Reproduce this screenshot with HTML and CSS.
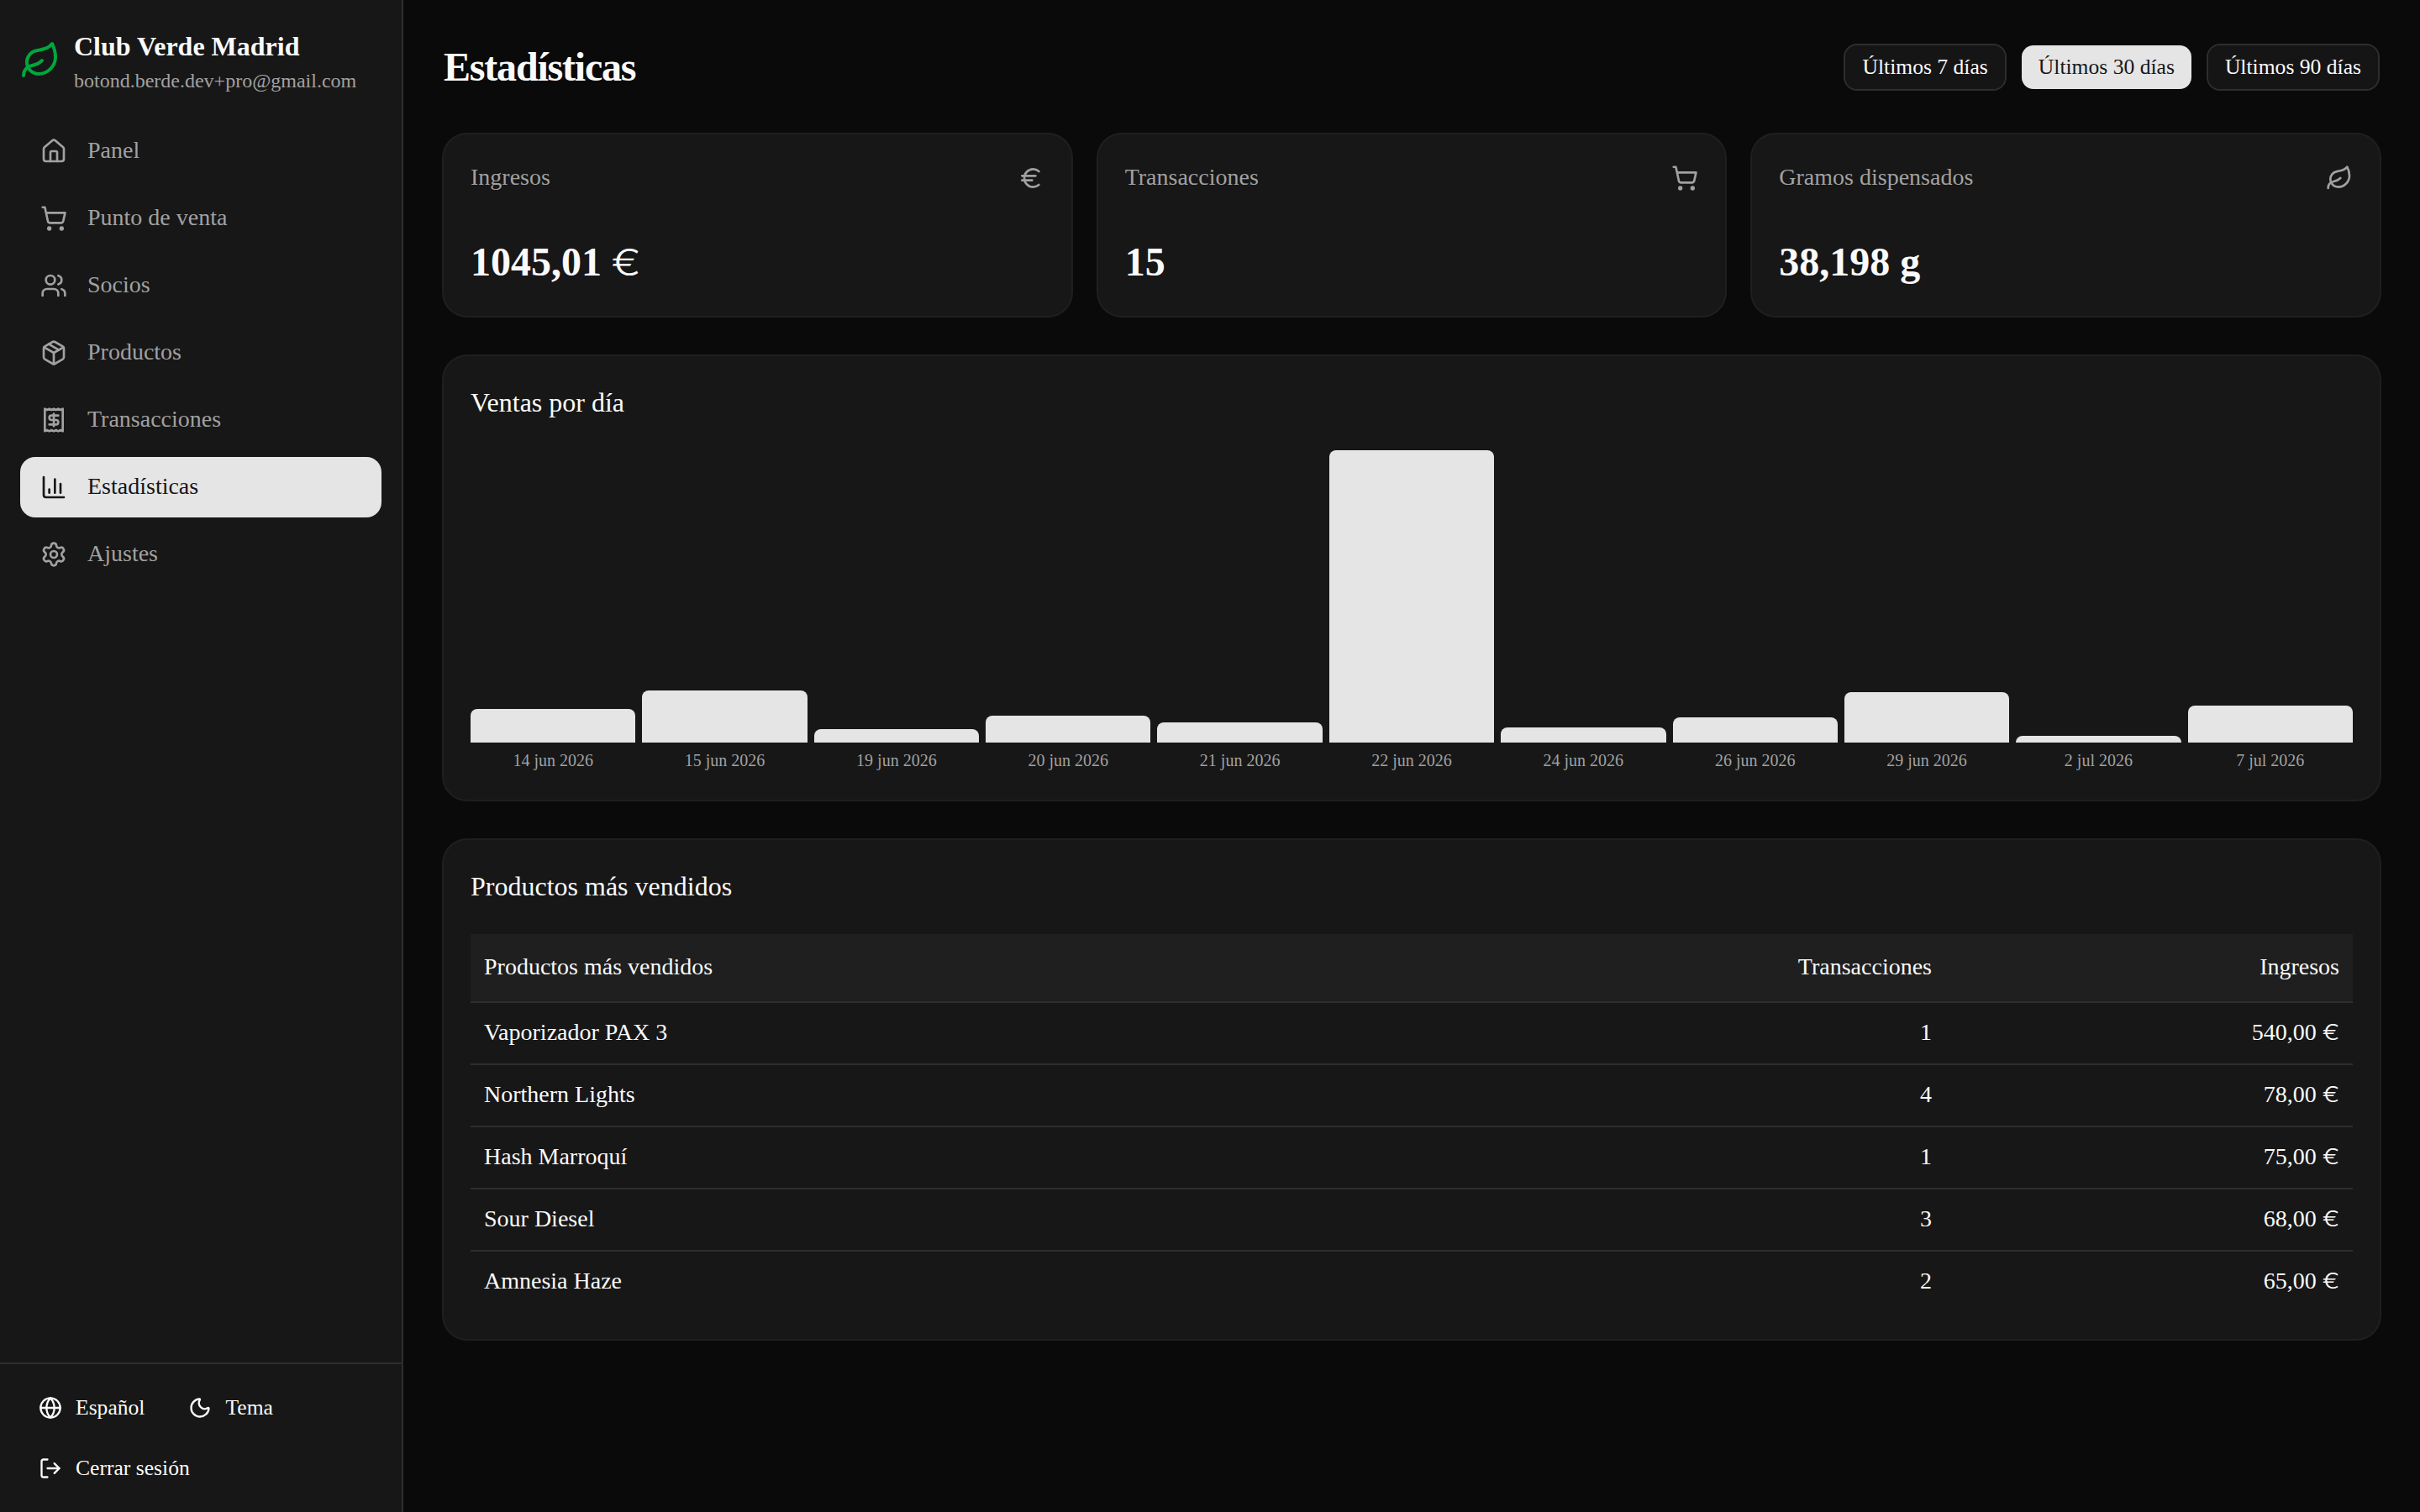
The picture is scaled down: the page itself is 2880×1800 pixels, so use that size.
FILE: index.html
```
<!DOCTYPE html>
<html lang="es">
<head>
  <meta charset="UTF-8" />
  <meta name="viewport" content="width=device-width, initial-scale=1.0"/>
  <title>Estadísticas | Club Verde Madrid</title>
  <link rel="stylesheet" href="styles.css">
</head>
<body>
  <!-- shared icons -->
  <svg class="sprite" width="0" height="0">
    <symbol id="leaf" viewBox="0 0 24 24">
      <path d="M11 20A7 7 0 0 1 9.8 6.1C15.5 5 17 4.48 19 2c1 2 2 4.18 2 8 0 5.5-4.78 10-10 10Z"/>
      <path d="M2 21c0-3 1.85-5.36 5.08-6C9.5 14.52 12 13 13 12"/>
    </symbol>
    <symbol id="cart" viewBox="0 0 24 24">
      <circle cx="8" cy="21" r="1"/>
      <circle cx="19" cy="21" r="1"/>
      <path d="M2.05 2.05h2l2.66 12.42a2 2 0 0 0 2 1.58h9.78a2 2 0 0 0 1.95-1.57l1.65-7.43H5.12"/>
    </symbol>
  </svg>

  <aside class="sidebar">
    <div class="brand">
      <svg class="icon brand-icon"><use href="#leaf"/></svg>
      <div class="brand-text">
        <div class="brand-name">Club Verde Madrid</div>
        <div class="brand-email">botond.berde.dev+pro@gmail.com</div>
      </div>
    </div>

    <nav class="nav">
      <a class="nav-item">
        <svg class="icon" viewBox="0 0 24 24"><path d="M15 21v-8a1 1 0 0 0-1-1h-4a1 1 0 0 0-1 1v8"/><path d="M3 10a2 2 0 0 1 .709-1.528l7-6a2 2 0 0 1 2.582 0l7 6A2 2 0 0 1 21 10v9a2 2 0 0 1-2 2H5a2 2 0 0 1-2-2z"/></svg>
        <span>Panel</span>
      </a>
      <a class="nav-item">
        <svg class="icon"><use href="#cart"/></svg>
        <span>Punto de venta</span>
      </a>
      <a class="nav-item">
        <svg class="icon" viewBox="0 0 24 24"><path d="M16 21v-2a4 4 0 0 0-4-4H6a4 4 0 0 0-4 4v2"/><path d="M16 3.128a4 4 0 0 1 0 7.744"/><path d="M22 21v-2a4 4 0 0 0-3-3.87"/><circle cx="9" cy="7" r="4"/></svg>
        <span>Socios</span>
      </a>
      <a class="nav-item">
        <svg class="icon" viewBox="0 0 24 24"><path d="M11 21.73a2 2 0 0 0 2 0l7-4A2 2 0 0 0 21 16V8a2 2 0 0 0-1-1.73l-7-4a2 2 0 0 0-2 0l-7 4A2 2 0 0 0 3 8v8a2 2 0 0 0 1 1.73z"/><path d="M12 22V12"/><path d="M3.29 7 12 12l8.71-5"/><path d="m7.5 4.27 9 5.15"/></svg>
        <span>Productos</span>
      </a>
      <a class="nav-item">
        <svg class="icon" viewBox="0 0 24 24"><path d="M4 2v20l2-1 2 1 2-1 2 1 2-1 2 1 2-1 2 1V2l-2 1-2-1-2 1-2-1-2 1-2-1-2 1Z"/><path d="M16 8h-6a2 2 0 1 0 0 4h4a2 2 0 1 1 0 4H8"/><path d="M12 17.5v-11"/></svg>
        <span>Transacciones</span>
      </a>
      <a class="nav-item active">
        <svg class="icon" viewBox="0 0 24 24"><path d="M3 3v16a2 2 0 0 0 2 2h16"/><path d="M18 17V9"/><path d="M13 17V5"/><path d="M8 17v-3"/></svg>
        <span>Estadísticas</span>
      </a>
      <a class="nav-item">
        <svg class="icon" viewBox="0 0 24 24"><path d="M9.671 4.136a2.34 2.34 0 0 1 4.659 0 2.34 2.34 0 0 0 3.319 1.915 2.34 2.34 0 0 1 2.33 4.033 2.34 2.34 0 0 0 0 3.831 2.34 2.34 0 0 1-2.33 4.033 2.34 2.34 0 0 0-3.319 1.915 2.34 2.34 0 0 1-4.659 0 2.34 2.34 0 0 0-3.32-1.915 2.34 2.34 0 0 1-2.33-4.033 2.34 2.34 0 0 0 0-3.831A2.34 2.34 0 0 1 6.35 6.051a2.34 2.34 0 0 0 3.319-1.915"/><circle cx="12" cy="12" r="3"/></svg>
        <span>Ajustes</span>
      </a>
    </nav>

    <div class="sidebar-footer">
      <div class="footer-row">
        <button class="btn btn-ghost">
          <svg class="icon" viewBox="0 0 24 24"><circle cx="12" cy="12" r="10"/><path d="M12 2a14.5 14.5 0 0 0 0 20 14.5 14.5 0 0 0 0-20"/><path d="M2 12h20"/></svg>
          Español
        </button>
        <button class="btn btn-ghost">
          <svg class="icon" viewBox="0 0 24 24"><path d="M20.985 12.486a9 9 0 1 1-9.473-9.472c.405-.022.617.46.402.803a6 6 0 0 0 8.268 8.268c.344-.215.825-.004.803.401"/></svg>
          Tema
        </button>
      </div>
      <div class="footer-row">
        <button class="btn btn-ghost">
          <svg class="icon" viewBox="0 0 24 24"><path d="m16 17 5-5-5-5"/><path d="M21 12H9"/><path d="M9 21H5a2 2 0 0 1-2-2V5a2 2 0 0 1 2-2h4"/></svg>
          Cerrar sesión
        </button>
      </div>
    </div>
  </aside>

  <main class="main">
    <header class="page-header">
      <h1>Estadísticas</h1>
      <div class="ranges">
        <button class="btn btn-outline">Últimos 7 días</button>
        <button class="btn btn-primary">Últimos 30 días</button>
        <button class="btn btn-outline">Últimos 90 días</button>
      </div>
    </header>

    <section class="stats">
      <div class="card">
        <div class="stat-head">
          <span>Ingresos</span>
          <svg class="icon" viewBox="0 0 24 24"><path d="M4 10h12"/><path d="M4 14h9"/><path d="M19 6a7.7 7.7 0 0 0-5.2-2A7.9 7.9 0 0 0 6 12c0 4.4 3.5 8 7.8 8 2 0 3.8-.8 5.2-2"/></svg>
        </div>
        <div class="stat-value">1045,01 <span class="euro">€</span></div>
      </div>
      <div class="card">
        <div class="stat-head">
          <span>Transacciones</span>
          <svg class="icon"><use href="#cart"/></svg>
        </div>
        <div class="stat-value">15</div>
      </div>
      <div class="card">
        <div class="stat-head">
          <span>Gramos dispensados</span>
          <svg class="icon"><use href="#leaf"/></svg>
        </div>
        <div class="stat-value">38,198 g</div>
      </div>
    </section>

    <section class="card">
      <h2>Ventas por día</h2>
      <div class="chart">
        <div class="day"><div class="bar" style="height: 40px"></div><span>14 jun 2026</span></div>
        <div class="day"><div class="bar" style="height: 62px"></div><span>15 jun 2026</span></div>
        <div class="day"><div class="bar" style="height: 16px"></div><span>19 jun 2026</span></div>
        <div class="day"><div class="bar" style="height: 32px"></div><span>20 jun 2026</span></div>
        <div class="day"><div class="bar" style="height: 24px"></div><span>21 jun 2026</span></div>
        <div class="day"><div class="bar" style="height: 348px"></div><span>22 jun 2026</span></div>
        <div class="day"><div class="bar" style="height: 18px"></div><span>24 jun 2026</span></div>
        <div class="day"><div class="bar" style="height: 30px"></div><span>26 jun 2026</span></div>
        <div class="day"><div class="bar" style="height: 60px"></div><span>29 jun 2026</span></div>
        <div class="day"><div class="bar" style="height: 8px"></div><span>2 jul 2026</span></div>
        <div class="day"><div class="bar" style="height: 44px"></div><span>7 jul 2026</span></div>
      </div>
    </section>

    <section class="card">
      <h2>Productos más vendidos</h2>
      <table class="products">
        <thead>
          <tr><th>Productos más vendidos</th><th class="col-count">Transacciones</th><th class="col-total">Ingresos</th></tr>
        </thead>
        <tbody>
          <tr><td>Vaporizador PAX 3</td><td>1</td><td>540,00 <span class="euro">€</span></td></tr>
          <tr><td>Northern Lights</td><td>4</td><td>78,00 <span class="euro">€</span></td></tr>
          <tr><td>Hash Marroquí</td><td>1</td><td>75,00 <span class="euro">€</span></td></tr>
          <tr><td>Sour Diesel</td><td>3</td><td>68,00 <span class="euro">€</span></td></tr>
          <tr><td>Amnesia Haze</td><td>2</td><td>65,00 <span class="euro">€</span></td></tr>
        </tbody>
      </table>
    </section>
  </main>
</body>
</html>
```
FILE: styles.css
```
* {
  box-sizing: border-box;
  margin: 0;
  padding: 0;
}

body {
  display: flex;
  height: 100vh;
  overflow: hidden;
  background: #0a0a0a;
  color: #fafafa;
  font-family: "Liberation Serif", Times, serif;
  font-size: 28px;
  line-height: 40px;
}

.sprite {
  position: absolute;
}

.icon {
  width: 32px;
  height: 32px;
  flex-shrink: 0;
  fill: none;
  stroke: currentColor;
  stroke-width: 2;
  stroke-linecap: round;
  stroke-linejoin: round;
}

/* sidebar */
.sidebar {
  display: flex;
  flex-direction: column;
  width: 480px;
  flex-shrink: 0;
  background: #171717;
  border-right: 2px solid #2e2e2e;
}

.brand {
  display: flex;
  align-items: center;
  gap: 16px;
  padding: 32px 24px;
}

.brand-icon {
  width: 48px;
  height: 48px;
  color: #00a63e;
}

.brand-name {
  font-size: 32px;
  line-height: 46px;
  font-weight: bold;
  padding-bottom: 2px;
}

.brand-email {
  font-size: 24px;
  line-height: 32px;
  color: #a1a1a1;
}

.nav {
  display: flex;
  flex-direction: column;
  flex: 1;
  gap: 8px;
  padding: 0 24px;
}

.nav-item {
  display: flex;
  align-items: center;
  gap: 24px;
  height: 72px;
  padding: 0 24px;
  border-radius: 18px;
  color: #a1a1a1;
}

.nav-item span,
.stat-head span {
  padding-bottom: 2px;
}

.nav-item.active {
  background: #e5e5e5;
  color: #171717;
}

.sidebar-footer {
  display: flex;
  flex-direction: column;
  gap: 16px;
  padding: 24px;
  border-top: 2px solid #2e2e2e;
}

.footer-row {
  display: flex;
  gap: 8px;
}

.btn {
  display: flex;
  align-items: center;
  gap: 16px;
  height: 56px;
  padding: 0 20px;
  border: 2px solid transparent;
  border-radius: 16px;
  background: transparent;
  background-clip: padding-box;
  color: #fafafa;
  font-family: inherit;
  font-size: 25.6px;
  white-space: nowrap;
}

.btn .icon {
  width: 28px;
  height: 28px;
}

.btn-outline {
  background-color: #151515;
  border-color: #2e2e2e;
}

.btn-primary {
  background-color: #e5e5e5;
  color: #171717;
}

/* main */
.main {
  display: flex;
  flex-direction: column;
  flex: 1;
  gap: 48px;
  padding: 48px;
}

.page-header {
  display: flex;
  align-items: center;
  justify-content: space-between;
}

h1 {
  font-size: 48px;
  line-height: 64px;
  letter-spacing: -0.025em;
}

h2 {
  font-size: 32px;
  line-height: 46px;
  font-weight: normal;
  margin-bottom: 34px;
}

.ranges {
  display: flex;
  gap: 16px;
}

.card {
  padding: 32px;
  border-radius: 28px;
  background: #171717;
  box-shadow: 0 0 0 2px #1f1f1f;
}

.stats {
  display: grid;
  grid-template-columns: repeat(3, 1fr);
  gap: 32px;
}

.stat-head {
  display: flex;
  align-items: center;
  justify-content: space-between;
  height: 40px;
  margin-bottom: 48px;
  color: #a1a1a1;
}

.stat-value {
  font-size: 48px;
  line-height: 64px;
  font-weight: bold;
}

/* wide, light euro sign */
.euro {
  display: inline-block;
  width: 0.8em;
  font-family: Inter, sans-serif;
  font-size: 0.9em;
  font-weight: 300;
  line-height: 1;
  text-align: center;
  transform: scaleX(1.22);
}

/* chart */
.chart {
  display: flex;
  gap: 8px;
  height: 384px;
}

.day {
  display: flex;
  flex-direction: column;
  justify-content: flex-end;
  flex: 1;
  gap: 8px;
  font-size: 20px;
  line-height: 26px;
  text-align: center;
  color: #a1a1a1;
}

.day span {
  padding-bottom: 2px;
}

.bar {
  background: #e5e5e5;
  border-radius: 8px 8px 0 0;
}

/* table */
.products {
  width: 100%;
  table-layout: fixed;
  border-collapse: separate;
  border-spacing: 0;
}

.products th {
  height: 82px;
  padding: 0 16px 2px;
  background: #1f1f1f;
  border-bottom: 2px solid #2e2e2e;
  font-weight: normal;
  text-align: right;
}

.products td {
  height: 74px;
  padding: 0 16px 2px;
  border-bottom: 2px solid #2e2e2e;
  text-align: right;
}

.products th:first-child,
.products td:first-child {
  text-align: left;
}

.products tbody tr:last-child td {
  height: 72px;
  border-bottom: none;
}

.products .col-count {
  width: 430px;
}

.products .col-total {
  width: 485px;
}
```
